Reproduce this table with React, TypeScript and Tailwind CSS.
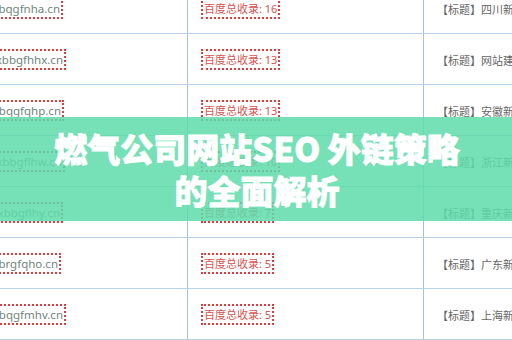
import React from "react";

type Row = { domain: string; w: string; count: string; title: string };

const rows: Row[] = [
  { domain: "www.xbqgfnha.cn", w: "w-[63px]", count: "16", title: "【标题】四川新闻网站建设" },
  { domain: "www.xbbgfhhx.cn", w: "w-[66px]", count: "13", title: "【标题】网站建设公司" },
  { domain: "www.xbqgfqhp.cn", w: "w-[64px]", count: "13", title: "【标题】安徽新闻网站" },
  { domain: "www.xbbgflhw.cn", w: "w-[65px]", count: "10", title: "【标题】浙江新闻网站" },
  { domain: "www.xbbgflhy.cn", w: "w-[63px]", count: "7", title: "【标题】重庆新闻网站" },
  { domain: "www.xbrgfqho.cn", w: "w-[61px]", count: "5", title: "【标题】广东新闻网站" },
  { domain: "www.xbqgfmhv.cn", w: "w-[66px]", count: "5", title: "【标题】上海新闻网站" },
];

export default function App() {
  return (
    <div className="relative w-[512px] h-[340px] overflow-hidden bg-white font-['Noto_Sans','Noto_Sans_CJK_SC',sans-serif]">
      <div className="-mt-[17px] flex flex-col">
        {rows.map((r, i) => (
          <div key={i} className="flex h-[51px] border-b border-[#b7d2e8]">
            <div className="w-[188px] shrink-0 border-r border-[#a3c5e0] flex items-center">
              <div className={`${r.w} flex justify-end`}>
                <span className="shrink-0 whitespace-nowrap border-2 border-dotted border-[#e03a3a] px-[1px] py-[1px] text-[11.5px] leading-[15px] text-[#71867c]">
                  {r.domain}
                </span>
              </div>
            </div>
            <div className="w-[236px] shrink-0 border-r border-[#a3c5e0] flex items-center pl-[13px]">
              <span className="whitespace-nowrap border-2 border-dotted border-[#e03a3a] px-[1px] py-[1px] text-[11px] leading-[15px] text-[#d9534f]">
                百度总收录: {r.count}
              </span>
            </div>
            <div className="flex-1 flex items-center pl-[13px] pt-[3px] overflow-hidden">
              <span className="whitespace-nowrap text-[11px] leading-[15px] text-[#666666]">
                {r.title}
              </span>
            </div>
          </div>
        ))}
      </div>
      <div className="absolute left-0 right-0 top-[117px] h-[104px] bg-[rgba(94,219,170,0.85)] flex flex-col items-center justify-center pl-[2px]">
        <div className="text-white font-black text-[33px] leading-[42px] whitespace-nowrap [-webkit-text-stroke:0.9px_white] font-['Noto_Sans_CJK_SC','Noto_Sans',sans-serif]">
          燃气公司网站SEO 外链策略
        </div>
        <div className="text-white font-black text-[33px] leading-[42px] whitespace-nowrap [-webkit-text-stroke:0.9px_white] font-['Noto_Sans_CJK_SC','Noto_Sans',sans-serif]">
          的全面解析
        </div>
      </div>
    </div>
  );
}
